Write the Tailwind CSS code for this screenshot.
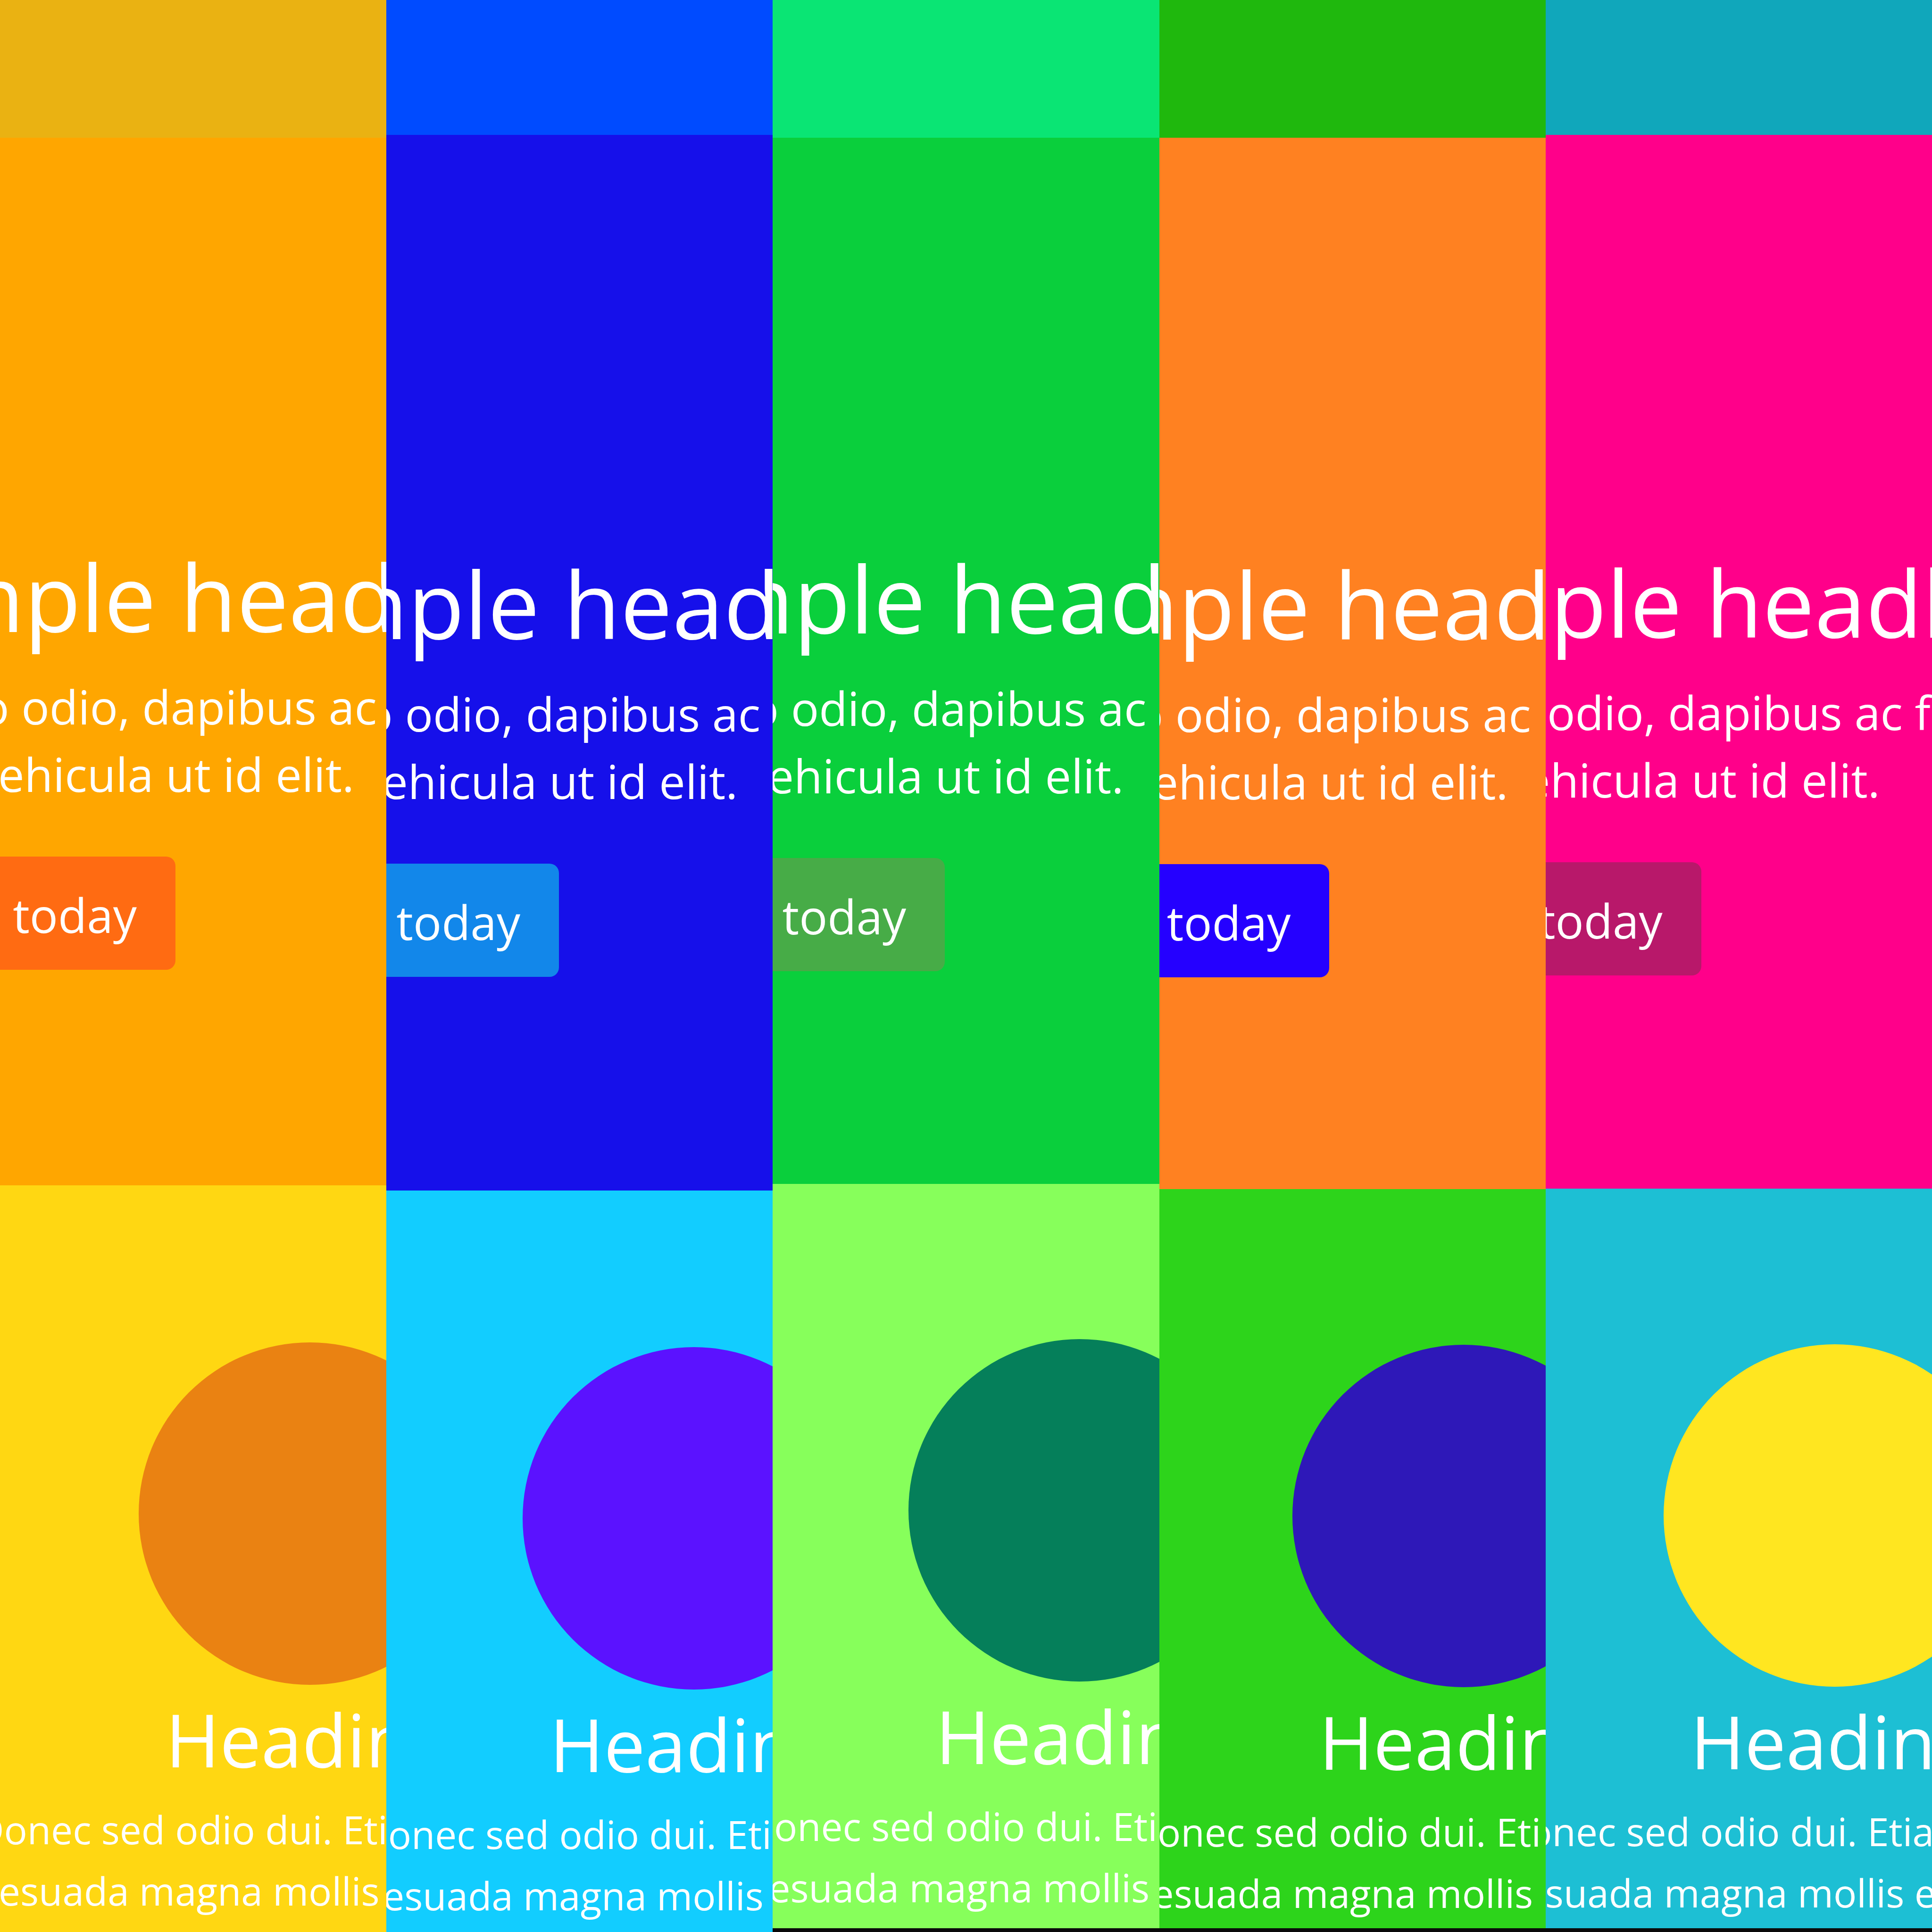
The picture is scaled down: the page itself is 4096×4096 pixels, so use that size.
<!DOCTYPE html>
<html lang="en">
<head>
<meta charset="utf-8">
<title>Colour palettes</title>
<script src="https://cdn.jsdelivr.net/npm/@tailwindcss/browser@4"></script>
</head>
<body class="bg-[#0a0a0a]">
<main class="grid grid-cols-5 min-h-screen overflow-hidden text-white font-['Open_Sans','Noto_Sans',sans-serif] whitespace-nowrap">

  <article class="flex flex-col min-w-0 overflow-hidden">
    <header class="h-[292px] bg-[#eab212]"></header>
    <section class="h-[2221px] pt-[854px] bg-[#ffa600]">
      <div class="-ml-[130px]">
        <h1 class="text-[196px] leading-[236px]">mple head</h1>
        <p class="mt-11 pl-[90px] text-[99px] leading-[143px]">o odio, dapibus ac<span class="block pl-[36px]">ehicula ut id elit.</span></p>
        <button class="block mt-[104px] ml-[30px] pl-10 pr-[82px] pt-[51px] pb-[45px] rounded-[20px] text-[100px] leading-[144px] bg-[#ff6b12]">p today</button>
      </div>
    </section>
    <section class="flex-1 pt-[333px] bg-[#ffd712]">
      <div class="-ml-[51px]">
        <div class="size-[726px] ml-[345px] rounded-full bg-[#ea8212]"></div>
        <h2 class="mt-[15px] pl-[402px] text-[156px] leading-[200px]">Headin</h2>
        <p class="mt-[26px] text-[82px] leading-[130px]">Donec sed odio dui. Eti<span class="block pl-[48px]">esuada magna mollis</span></p>
      </div>
    </section>
  </article>

  <article class="flex flex-col min-w-0 overflow-hidden">
    <header class="h-[286px] bg-[#004bff]"></header>
    <section class="h-[2238px] pt-[875px] bg-[#1610ea]">
      <div class="-ml-[136px]">
        <h1 class="text-[196px] leading-[236px]">mple head</h1>
        <p class="mt-11 pl-[90px] text-[99px] leading-[143px]">o odio, dapibus ac<span class="block pl-[36px]">ehicula ut id elit.</span></p>
        <button class="block mt-[104px] ml-[30px] pl-10 pr-[82px] pt-[51px] pb-[45px] rounded-[20px] text-[100px] leading-[144px] bg-[#1287ea]">p today</button>
      </div>
    </section>
    <section class="flex-1 pt-[332px] bg-[#12cdff]">
      <div class="-ml-[56px]">
        <div class="size-[726px] ml-[345px] rounded-full bg-[#5b12ff]"></div>
        <h2 class="mt-[15px] pl-[402px] text-[156px] leading-[200px]">Headin</h2>
        <p class="mt-[26px] text-[82px] leading-[130px]">Donec sed odio dui. Eti<span class="block pl-[48px]">esuada magna mollis</span></p>
      </div>
    </section>
  </article>

  <article class="flex flex-col min-w-0 overflow-hidden border-b-8 border-[#0a0a0a]">
    <header class="h-[292px] bg-[#0ae574]"></header>
    <section class="h-[2218px] pt-[857px] bg-[#0acf3c]">
      <div class="-ml-[137px]">
        <h1 class="text-[196px] leading-[236px]">mple head</h1>
        <p class="mt-11 pl-[90px] text-[99px] leading-[143px]">o odio, dapibus ac<span class="block pl-[36px]">ehicula ut id elit.</span></p>
        <button class="block mt-[104px] ml-[30px] pl-10 pr-[82px] pt-[51px] pb-[45px] rounded-[20px] text-[100px] leading-[144px] bg-[#47ac47]">p today</button>
      </div>
    </section>
    <section class="flex-1 pt-[329px] bg-[#87ff5b]">
      <div class="-ml-[57px]">
        <div class="size-[726px] ml-[345px] rounded-full bg-[#057f5a]"></div>
        <h2 class="mt-[15px] pl-[402px] text-[156px] leading-[200px]">Headin</h2>
        <p class="mt-[26px] text-[82px] leading-[130px]">Donec sed odio dui. Eti<span class="block pl-[48px]">esuada magna mollis</span></p>
      </div>
    </section>
  </article>

  <article class="flex flex-col min-w-0 overflow-hidden border-b-8 border-[#0a0a0a]">
    <header class="h-[292px] bg-[#1fb80d]"></header>
    <section class="h-[2229px] pt-[870px] bg-[#ff8121]">
      <div class="-ml-[141px]">
        <h1 class="text-[196px] leading-[236px]">mple head</h1>
        <p class="mt-11 pl-[90px] text-[99px] leading-[143px]">o odio, dapibus ac<span class="block pl-[36px]">ehicula ut id elit.</span></p>
        <button class="block mt-[104px] ml-[30px] pl-10 pr-[82px] pt-[51px] pb-[45px] rounded-[20px] text-[100px] leading-[144px] bg-[#2500ff]">p today</button>
      </div>
    </section>
    <section class="flex-1 pt-[330px] bg-[#2dd41b]">
      <div class="-ml-[63px]">
        <div class="size-[726px] ml-[345px] rounded-full bg-[#2e18b8]"></div>
        <h2 class="mt-[15px] pl-[402px] text-[156px] leading-[200px]">Headin</h2>
        <p class="mt-[26px] text-[82px] leading-[130px]">Donec sed odio dui. Eti<span class="block pl-[48px]">esuada magna mollis</span></p>
      </div>
    </section>
  </article>

  <article class="flex flex-col min-w-0 overflow-hidden border-b-8 border-[#0a0a0a]">
    <header class="h-[286px] bg-[#10a7bb]"></header>
    <section class="h-[2234px] pt-[872px] bg-[#ff008a]">
      <div class="-ml-[172px]">
        <h1 class="text-[196px] leading-[236px]">mple headl</h1>
        <p class="mt-11 pl-[90px] text-[99px] leading-[143px]">o odio, dapibus ac f<span class="block pl-[36px]">ehicula ut id elit.</span></p>
        <button class="block mt-[104px] ml-[30px] pl-10 pr-[82px] pt-[51px] pb-[45px] rounded-[20px] text-[100px] leading-[144px] bg-[#b8186a]">p today</button>
      </div>
    </section>
    <section class="flex-1 pt-[330px] bg-[#1dbfd4]">
      <div class="-ml-[95px]">
        <div class="size-[726px] ml-[345px] rounded-full bg-[#ffe620]"></div>
        <h2 class="mt-[15px] pl-[402px] text-[156px] leading-[200px]">Headin</h2>
        <p class="mt-[26px] text-[82px] leading-[130px]">Donec sed odio dui. Etia<span class="block pl-[48px]">esuada magna mollis e</span></p>
      </div>
    </section>
  </article>

</main>
</body>
</html>
